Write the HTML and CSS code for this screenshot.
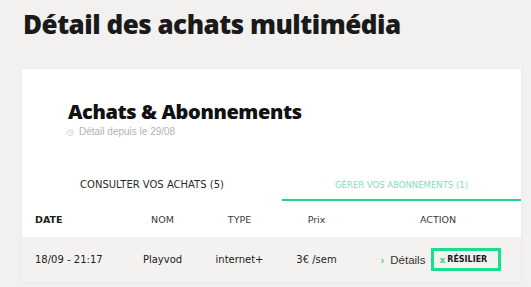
FILE: index.html
```html
<!DOCTYPE html>
<html lang="fr">
<head>
<meta charset="utf-8">
<title>Détail des achats multimédia</title>
<link rel="stylesheet" href="styles.css">
</head>
<body>
<main class="page">
  <h1 class="title">Détail des achats multimédia</h1>
  <section class="card">
    <header class="card-head">
      <h2 class="card-title">Achats &amp; Abonnements</h2>
      <p class="since">
        <svg class="clock" viewBox="0 0 10 10" width="7" height="7" aria-hidden="true">
          <circle cx="5" cy="5" r="4.2" fill="none" stroke="#c8c8c8" stroke-width="1.2"/>
          <path d="M5 2.8V5.2H6.8" fill="none" stroke="#c8c8c8" stroke-width="1"/>
        </svg>
        <span>Détail depuis le 29/08</span>
      </p>
    </header>
    <nav class="tabs">
      <div class="tab">CONSULTER VOS ACHATS (5)</div>
      <div class="tab tab-active">GÉRER VOS ABONNEMENTS (1)</div>
    </nav>
    <div class="table">
      <div class="row row-head">
        <div class="cell cell-date">DATE</div>
        <div class="cell">NOM</div>
        <div class="cell">TYPE</div>
        <div class="cell">Prix</div>
        <div class="cell">ACTION</div>
      </div>
      <div class="row row-data">
        <div class="cell cell-date">18/09 - 21:17</div>
        <div class="cell">Playvod</div>
        <div class="cell">internet+</div>
        <div class="cell">3€ /sem</div>
        <div class="cell cell-action">
          <a class="details"><span class="chev">›</span>Détails</a>
          <button class="cancel"><span class="x">x</span>RÉSILIER</button>
        </div>
      </div>
    </div>
  </section>
</main>
</body>
</html>
```
FILE: styles.css
```css
* { box-sizing: border-box; }
html, body { margin: 0; padding: 0; }
body {
  background: #f2f1ef;
  font-family: "DejaVu Sans", "Noto Sans", sans-serif;
  color: #1b1b1b;
  width: 531px;
  height: 287px;
  overflow: hidden;
}
.page {
  padding: 0 10px 0 22px;
}
.title {
  margin: 0;
  padding: 8px 0 0 1px;
  height: 69px;
  font-family: "Open Sans", "DejaVu Sans", sans-serif;
  font-size: 26px;
  line-height: 32px;
  font-weight: 800;
  color: #1a1a1a;
  letter-spacing: -0.5px;
}
.card {
  background: #fff;
  width: 499px;
  height: 213px;
  box-shadow: 0 0 3px rgba(0,0,0,0.06);
}
.card-head {
  padding: 31px 0 0 46px;
  height: 100px;
}
.card-title {
  margin: 0;
  font-family: "Open Sans", "DejaVu Sans", sans-serif;
  font-size: 20px;
  line-height: 24px;
  font-weight: 800;
  color: #111;
  letter-spacing: -0.4px;
}
.since {
  margin: 1px 0 0 -1px;
  display: flex;
  align-items: center;
  gap: 5px;
  font-family: "Liberation Sans", Arial, sans-serif;
  font-size: 10px;
  line-height: 14px;
  color: #b3b3b3;
}
.tabs {
  display: grid;
  grid-template-columns: 260px 1fr;
  height: 32px;
}
.tab {
  display: flex;
  align-items: center;
  justify-content: center;
  font-size: 10px;
  color: #2a2a2a;
  border-bottom: 2px solid transparent;
  padding-top: 1px;
}
.tab-active {
  color: #7de3b1;
  font-size: 8.5px;
  border-bottom-color: #1ed38a;
}
.row {
  display: grid;
  grid-template-columns: 102px 77px 77px 77px 1fr;
  align-items: center;
}
.cell {
  text-align: center;
}
.cell-date {
  text-align: left;
  padding-left: 13px;
}
.row-head {
  height: 36px;
  font-size: 9.5px;
  color: #3a3a3a;
}
.row-head .cell-date {
  font-weight: 700;
  color: #222;
}
.row-data {
  height: 45px;
  background: #f3f2f0;
  font-size: 10px;
  color: #222;
}
.cell-action {
  display: flex;
  align-items: center;
  justify-content: center;
  gap: 6px;
  padding-left: 6px;
}
.details {
  display: flex;
  align-items: center;
  font-family: "Liberation Sans", Arial, sans-serif;
  font-size: 11.5px;
  color: #333;
}
.chev {
  color: #3ddc97;
  font-weight: 700;
  font-size: 11px;
  margin-right: 6px;
}
.cancel {
  width: 70px;
  height: 23px;
  border: 3px solid #17e08a;
  background: transparent;
  padding: 0 0 0 5px;
  display: flex;
  align-items: center;
  font-family: "DejaVu Sans", sans-serif;
  font-weight: 700;
  font-size: 8px;
  color: #1a1a1a;
}
.x {
  color: #2fd88e;
  font-size: 9px;
  margin-right: 2px;
}
```
